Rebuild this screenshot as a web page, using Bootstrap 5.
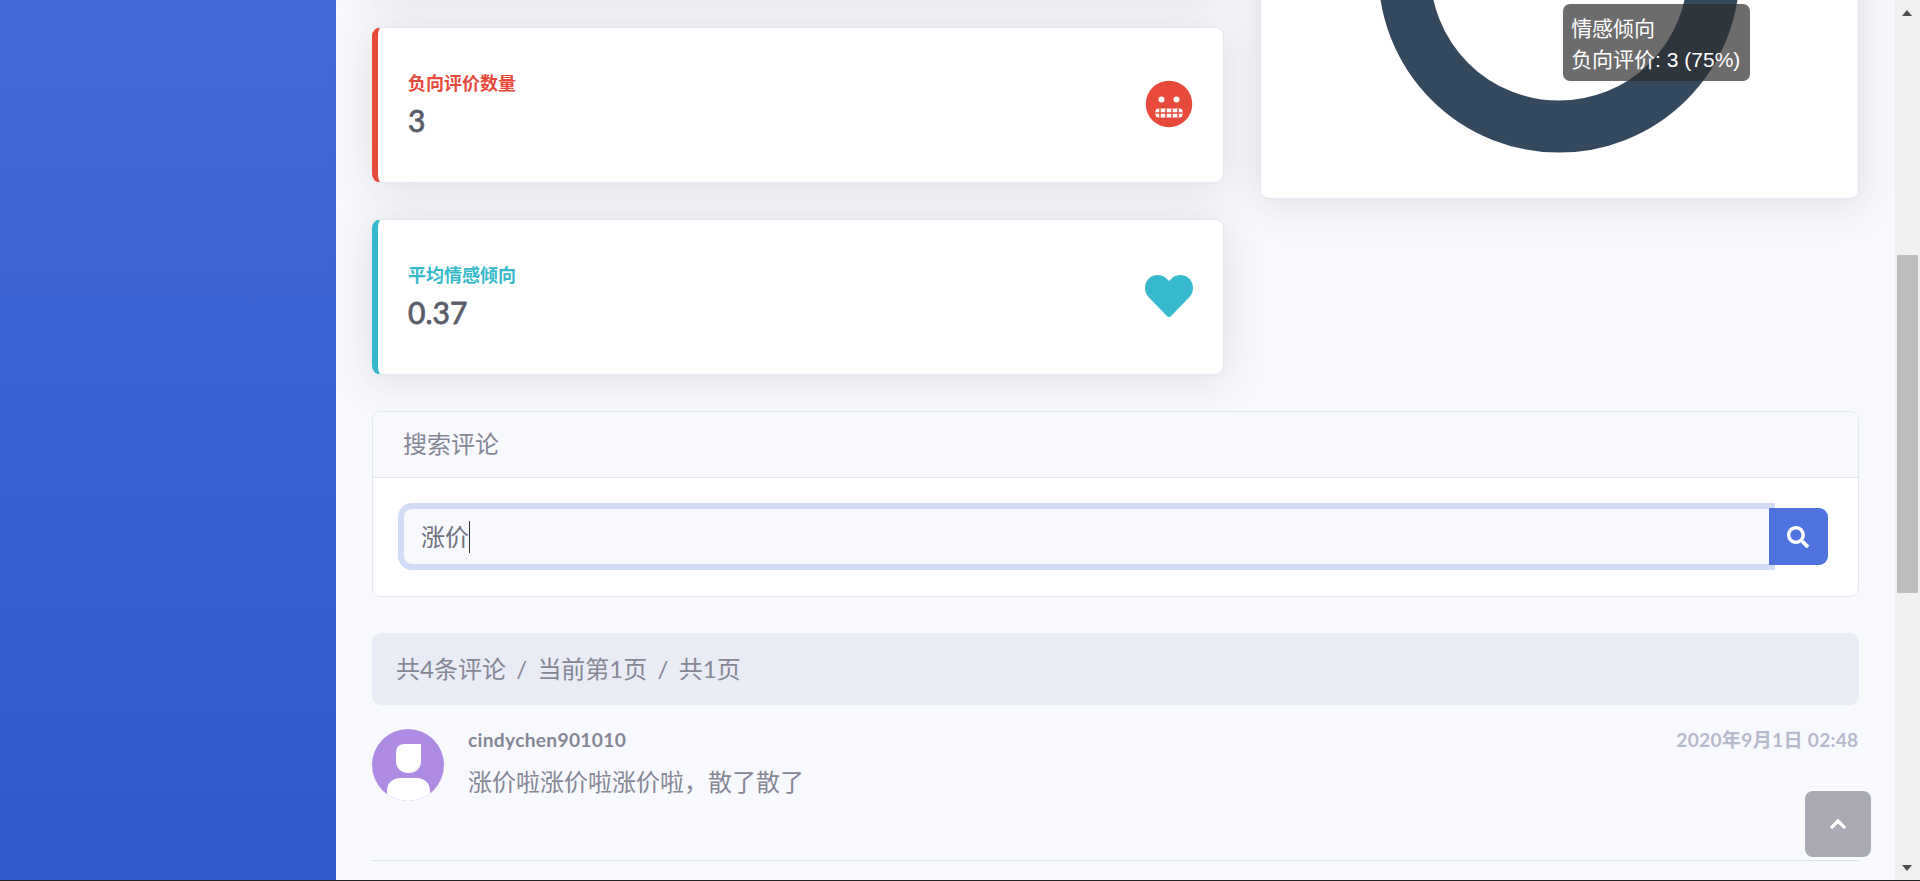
<!DOCTYPE html>
<html lang="zh-CN">
<head>
  <meta charset="UTF-8">
  <meta name="viewport" content="width=device-width, initial-scale=1">
  <title>评论分析</title>
  <link href="https://cdn.jsdelivr.net/npm/bootstrap@5.3.0/dist/css/bootstrap.min.css" rel="stylesheet">
  <style>
    /* the reference was taken at 150% zoom, so 1rem = 24px here */
    html { font-size: 24px; }
    body {
      height: 881px;
      overflow: hidden;
      background: #f8f9fc;
      color: #858796;
      font-family: Lato, "Noto Sans CJK SC", sans-serif;
      border-bottom: 1px solid #222;
    }
    .side-strip {
      width: 336px;
      flex: none;
      background: linear-gradient(180deg, #4469d9 0%, #2f59c9 100%);
    }
    .page-main {
      flex: 1 1 0;
      min-width: 0;
      padding: 0 36.5px 0 36px;
    }
    .fake-scroll {
      width: 25px;
      flex: none;
      background: #f0f0f0;
    }
    .scroll-thumb {
      width: 21px;
      height: 338px;
      margin: 239px 0 0 2px;
      background: #bdbdbd;
    }
    .scroll-up, .scroll-down {
      width: 0;
      height: 0;
      border-left: 5.5px solid transparent;
      border-right: 5.5px solid transparent;
    }
    .scroll-up { margin: 10px 0 0 7px; border-bottom: 6px solid #505050; }
    .scroll-down { margin: auto 0 9px 7px; border-top: 6px solid #505050; }

    .card {
      --bs-card-border-width: 1px;
      --bs-card-border-color: #e3e6f0;
    }
    .stat-shadow { box-shadow: 0 3.6px 42px 0 rgba(58, 59, 69, .15); }
    .stat-tile {
      height: 156px;
      margin-bottom: 36px;
      border-left-width: 6px;
      border-left-style: solid;
    }
    .stat-tile.first-tile { margin-top: -165px; border-left-color: #1cc88a; }
    .tile-red { border-left-color: #e74a3b; }
    .tile-teal { border-left-color: #36b9cc; }
    .tile-body { padding: 0 30px 3px; height: 100%; }
    .tile-label { font-size: 18px; font-weight: 700; line-height: 27px; margin-bottom: 5px; }
    .tile-num { font-size: 30px; font-weight: 400; line-height: 36px; color: #5a5c69; -webkit-text-stroke: .8px #5a5c69; }
    .txt-red { color: #e74a3b; }
    .txt-teal { color: #36b9cc; }
    .fill-red { fill: #e74a3b; }
    .fill-teal { fill: #36b9cc; }
    .tile-icon { width: 48px; height: 48px; display: block; }

    .chart-card { margin-top: -302px; padding: 92px 0 45px; align-items: center; }
    .donut { width: 362px; height: 362px; display: block; }
    .chart-tip {
      position: absolute;
      top: 305px;
      left: 302px;
      width: 187px;
      height: 77px;
      padding: 9px 8px 0;
      border-radius: 7px;
      background: rgba(46, 46, 46, .7);
      color: #fff;
      font: 21px/31px "Liberation Sans", "Noto Sans CJK SC", sans-serif;
      white-space: nowrap;
    }

    .search-card { margin-bottom: 36px; }
    .search-head {
      padding: 14px 30px 15px;
      background: #f8f9fc;
      border-bottom: 1px solid #e3e6f0;
      line-height: 36px;
    }
    .search-body { padding: 30px 30px 31px; background: #fff; }
    .search-input, .search-input:focus {
      padding: 9.5px 18px 9.5px 17px;
      background: #f8f9fc;
      color: #6e707e;
      border: 1px solid #d3dcf7;
      box-shadow: 0 0 0 5px #d3dcf7;
    }
    .search-go {
      width: 59px;
      padding: 0;
      background: #4e73df;
      border: 0;
      position: relative;
      z-index: 5;
    }
    .search-go svg { width: 22px; height: 22px; fill: #fff; display: block; margin: auto; }
    .fake-caret {
      position: absolute;
      left: 66px;
      top: 13px;
      width: 1px;
      height: 32px;
      margin: 0 !important;
      background: #333;
      z-index: 6;
    }

    .crumb-band {
      --bs-breadcrumb-margin-bottom: 1rem;
      --bs-breadcrumb-padding-x: 1rem;
      --bs-breadcrumb-padding-y: .75rem;
      --bs-breadcrumb-item-padding-x: 10.3px;
      --bs-breadcrumb-bg: #e9ecf4;
      --bs-breadcrumb-border-radius: 9px;
      --bs-breadcrumb-divider-color: #858796;
      --bs-breadcrumb-item-active-color: #858796;
    }

    .user-pic { width: 72px; height: 72px; display: block; flex: none; }
    .user-name { font-size: 19.2px; font-weight: 700; line-height: 23px; margin-top: -1.5px; letter-spacing: .3px; }
    .post-time { font-size: 19.2px; font-weight: 700; line-height: 23px; margin-top: -1.5px; letter-spacing: .25px; color: #b7b9cc; }
    .post-text { margin-top: 13.5px; line-height: 36px; }
    .post-row { padding-bottom: 59px; }
    .post-rule { margin: 0; border: 0; border-top: 1px solid #dfe1e8; opacity: 1; }

    .back-top {
      position: absolute;
      left: 1805px;
      top: 791px;
      width: 66px;
      height: 66px;
      border-radius: 8px;
      background: rgba(90, 92, 105, .5);
    }
    .back-top svg { width: 16px; height: 18px; fill: #fff; stroke: #fff; stroke-width: 24; display: block; }
  </style>
</head>
<body class="d-flex position-relative">
  <aside class="side-strip"></aside>

  <main class="page-main">
    <div class="row">
      <div class="col-7">
        <div class="card stat-tile stat-shadow first-tile"></div>

        <div class="card stat-tile stat-shadow tile-red">
          <div class="tile-body d-flex align-items-center justify-content-between">
            <div>
              <div class="tile-label txt-red">负向评价数量</div>
              <div class="tile-num">3</div>
            </div>
            <svg class="tile-icon" viewBox="0 0 496 512">
              <circle class="fill-red" cx="248" cy="256" r="248"/>
              <circle cx="168" cy="208" r="32" fill="#fff"/>
              <circle cx="328" cy="208" r="32" fill="#fff"/>
              <rect x="104" y="304" width="288" height="96" rx="32" fill="#fff"/>
              <path d="M152 304v96M216 304v96M280 304v96M344 304v96M104 352h288" stroke="#e74a3b" stroke-width="16" fill="none"/>
            </svg>
          </div>
        </div>

        <div class="card stat-tile stat-shadow tile-teal">
          <div class="tile-body d-flex align-items-center justify-content-between">
            <div>
              <div class="tile-label txt-teal">平均情感倾向</div>
              <div class="tile-num">0.37</div>
            </div>
            <svg class="tile-icon fill-teal" viewBox="0 0 512 512"><path d="M462.3 62.6C407.5 15.9 326 24.3 275.7 76.2L256 96.5l-19.7-20.3C186.1 24.3 104.5 15.9 49.7 62.6c-62.8 53.6-66.1 149.8-9.9 207.9l193.5 199.8c12.5 12.9 32.8 12.9 45.3 0l193.5-199.8c56.3-58.1 53-154.3-9.8-207.9z"/></svg>
          </div>
        </div>
      </div>

      <div class="col-5">
        <div class="card stat-shadow chart-card">
          <svg class="donut" viewBox="0 0 362 362"><circle cx="181" cy="181" r="154.6" fill="none" stroke="#34495e" stroke-width="52"/></svg>
          <div class="chart-tip">情感倾向<br>负向评价: 3 (75%)</div>
        </div>
      </div>
    </div>

    <div class="card search-card overflow-hidden">
      <div class="search-head">搜索评论</div>
      <div class="search-body">
        <div class="input-group">
          <input type="text" class="form-control search-input" value="涨价">
          <span class="fake-caret"></span>
          <button class="btn search-go" type="button">
            <svg viewBox="0 0 512 512"><path d="M505 442.7L405.3 343c-4.5-4.5-10.6-7-17-7H372c27.6-35.3 44-79.7 44-128C416 93.1 322.9 0 208 0S0 93.1 0 208s93.1 208 208 208c48.3 0 92.7-16.4 128-44v16.3c0 6.4 2.5 12.5 7 17l99.7 99.7c9.4 9.4 24.6 9.4 33.9 0l28.3-28.3c9.4-9.4 9.4-24.6.1-34zM208 336c-70.7 0-128-57.2-128-128 0-70.7 57.2-128 128-128 70.7 0 128 57.2 128 128 0 70.7-57.2 128-128 128z"/></svg>
          </button>
        </div>
      </div>
    </div>

    <ol class="breadcrumb crumb-band">
      <li class="breadcrumb-item active">共4条评论</li>
      <li class="breadcrumb-item active">当前第1页</li>
      <li class="breadcrumb-item active">共1页</li>
    </ol>

    <div class="d-flex post-row">
      <svg class="user-pic me-3" viewBox="0 0 72 72">
        <defs><clipPath id="picClip"><circle cx="36" cy="36" r="36"/></clipPath></defs>
        <g clip-path="url(#picClip)">
          <rect width="72" height="72" fill="#ae8ce3"/>
          <path d="M33 15h16v17c0 7-5 12-12.5 12S24 39 24 32v-8c0-6 3-9 9-9z" fill="#fff"/>
          <path d="M15 72V62c0-8 6-13 13-13h17c7 0 13 5 13 13v10z" fill="#fff"/>
        </g>
      </svg>
      <div class="flex-grow-1">
        <div class="d-flex justify-content-between">
          <div class="user-name">cindychen901010</div>
          <div class="post-time">2020年9月1日 02:48</div>
        </div>
        <div class="post-text">涨价啦涨价啦涨价啦，散了散了</div>
      </div>
    </div>
    <hr class="post-rule">
  </main>

  <div class="fake-scroll d-flex flex-column">
    <div class="scroll-up"></div>
    <div class="scroll-thumb"></div>
    <div class="scroll-down"></div>
  </div>

  <a class="back-top d-flex align-items-center justify-content-center" href="#">
    <svg viewBox="0 0 448 512"><path d="M240.971 130.524l194.343 194.343c9.373 9.373 9.373 24.569 0 33.941l-22.667 22.667c-9.357 9.357-24.522 9.375-33.901.04L224 227.495 69.255 381.516c-9.379 9.335-24.544 9.317-33.901-.04l-22.667-22.667c-9.373-9.373-9.373-24.569 0-33.941L207.03 130.525c9.372-9.373 24.568-9.373 33.941-.001z"/></svg>
  </a>

  <script src="https://cdn.jsdelivr.net/npm/bootstrap@5.3.0/dist/js/bootstrap.bundle.min.js"></script>
</body>
</html>
